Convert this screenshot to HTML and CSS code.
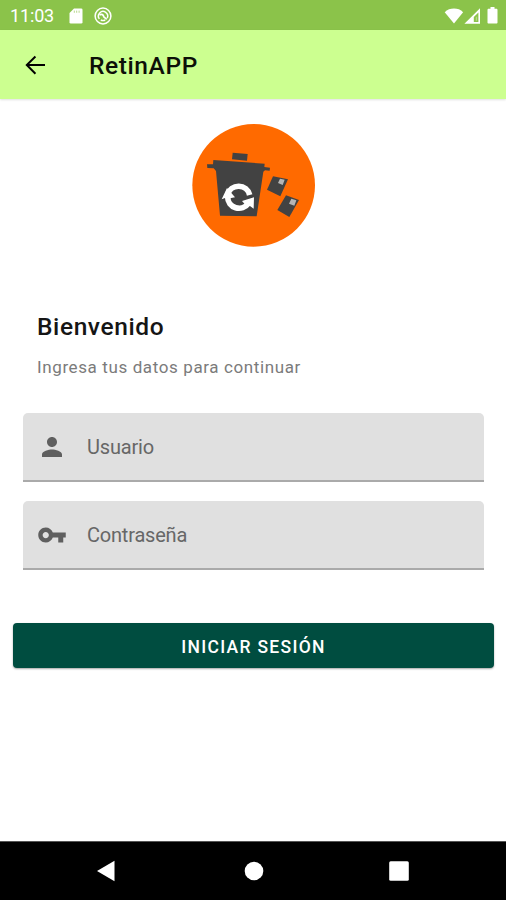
FILE: index.html
```html
<!DOCTYPE html>
<html lang="es">
<head>
<meta charset="utf-8">
<title>RetinAPP</title>
<link rel="stylesheet" href="styles.css">
</head>
<body>
<div class="screen">
  <div class="status-bar">
    <span class="clock">11:03</span>
    <svg class="sd" width="14" height="16" viewBox="0 0 14 16"><path d="M5 0.5h7.2a1.3 1.3 0 0 1 1.3 1.3v12.4a1.3 1.3 0 0 1-1.3 1.3H1.8a1.3 1.3 0 0 1-1.3-1.3V5z" fill="#fff"/><path d="M5.3 2.6v2.2M7.7 2.6v2.2M10.1 2.6v2.2" stroke="#b9d88f" stroke-width="1"/></svg>
    <svg class="sync" width="18" height="18" viewBox="0 0 18 18" fill="none" stroke="#fff"><circle cx="9" cy="9" r="7.9" stroke-width="1.5"/><path d="M5.400 11.900a4.600 4.600 0 1 1 7.800-.8M6.800 13a4.600 4.600 0 0 0 4.400 0" stroke-width="1.500"/><path d="M5.500 8c2.200-1.200 3.900-.4 4.300 1.800l2.900 2.500" stroke-width="1.700"/></svg>
    <div class="signals">
      <svg width="20" height="16" viewBox="0 0 20 16"><path d="M.7 4.2C3.200 1.700 6.500.6 10 .6s6.600 1.100 9.100 3.600L10 15.500z" fill="#fff"/></svg>
      <svg width="17" height="16" viewBox="0 0 17 16"><path fill="#fff" fill-rule="evenodd" d="M16 .2V15.800H.4zM14.400 4.400L9.800 9v4.900h4.600z"/><path fill="#fff" d="M11.800 9.500l1.300-1.300v4.500h-1.300z" opacity=".35"/></svg>
      <svg class="battery" width="11" height="17" viewBox="0 0 11 17"><path fill="#fff" d="M3.500 0h4v1.700h1.900c.6 0 1.100.5 1.100 1.100v12.600c0 .6-.5 1.100-1.100 1.100H1.600c-.6 0-1.100-.5-1.100-1.100V2.800c0-.6.5-1.100 1.100-1.100h1.900z"/></svg>
    </div>
  </div>
  <header class="app-bar">
    <svg class="back" width="30" height="30" viewBox="0 0 24 24"><path d="M20 11.200H7.400l5.500-5.500L11.800 4.500 4.300 12l7.500 7.500 1.100-1.200-5.500-5.500H20z"/></svg>
    <h1 class="app-title">RetinAPP</h1>
  </header>
  <main class="content">
    <svg class="logo" width="124" height="124" viewBox="33 24 372 372">
      <circle cx="221" cy="211" r="184" fill="#ff6a00"/>
      <g fill="#424242">
        <path d="M158 113l45 4-2 20-45-4z"/>
        <path d="M100 135l154 11-1 10 17 2-1 9-14-1-5 4-20 134-110-2-12-134-7-8-19-1-1-11 18 0z"/>
        <path d="M279 184l45 9-23 51-40-20z"/>
        <path d="M318 241l39 14-29 51-36-21z"/>
      </g>
      <path d="M300 191l14 3-6 16-14-6zM334 251l15 5-6 16-16-6z" fill="#b5b5b5"/>
      <g fill="none" stroke="#fff" stroke-width="17">
        <path d="M143 239a34 34 0 0 1 66 1"/>
        <path d="M143 246a34 34 0 0 0 62 19"/>
      </g>
      <path d="M125 253l16-34 24 28-15 3-9-3zM186 258l36-11-1 34-10-7-14-3z" fill="#fff"/>
    </svg>
    <h2 class="welcome">Bienvenido</h2>
    <p class="hint">Ingresa tus datos para continuar</p>
    <div class="field">
      <svg width="30" height="30" viewBox="0 0 24 24"><path d="M12 12c2.210 0 4-1.790 4-4s-1.790-4-4-4-4 1.790-4 4 1.790 4 4 4zm0 2c-2.670 0-8 1.340-8 4v2h16v-2c0-2.660-5.330-4-8-4z"/></svg>
      <span class="user">Usuario</span>
    </div>
    <div class="field">
      <svg width="30" height="30" viewBox="0 0 24 24"><path d="M12.650 10C11.830 7.670 9.610 6 7 6c-3.310 0-6 2.690-6 6s2.690 6 6 6c2.610 0 4.830-1.670 5.650-4H17v4h4v-4h2v-4H12.650zM7 14.500c-1.400 0-2.500-1.100-2.500-2.500s1.100-2.500 2.500-2.500 2.500 1.100 2.500 2.500-1.100 2.500-2.500 2.500z"/></svg>
      <span class="password">Contraseña</span>
    </div>
    <button class="login">INICIAR SESIÓN</button>
  </main>
  <nav class="nav-bar">
    <svg width="20" height="24" viewBox="0 0 20 24"><path d="M18.500 1.800v20.400L1 12z"/></svg>
    <svg class="home" width="20" height="24" viewBox="0 0 20 24"><circle cx="10" cy="12" r="9.300"/></svg>
    <svg width="22" height="24" viewBox="0 0 22 24"><rect x="1.200" y="2.200" width="19.600" height="19.600" rx="1.500"/></svg>
  </nav>
</div>
</body>
</html>
```
FILE: styles.css
```css
* { box-sizing: border-box; }
body { margin: 0; background: #fff; font-family: Roboto, "Liberation Sans", sans-serif; }
.screen { width: 506px; height: 900px; display: flex; flex-direction: column; overflow: hidden; }
.status-bar { height: 30px; flex: none; background: #8bc34a; display: flex; align-items: center; padding: 1px 8px 0 10px; color: #fff; }
.clock { width: 44px; font-size: 18px; line-height: 28px; letter-spacing: -0.15px; padding-top: 1px; white-space: nowrap; }
.sd { margin-left: 15px; }
.sync { margin-left: 11px; }
.signals { margin-left: auto; display: flex; align-items: center; }
.battery { margin-left: 6px; }
.app-bar { height: 69px; flex: none; background: #ccff90; display: flex; align-items: center; padding-left: 20px; box-shadow: 0 1px 2px rgba(0, 0, 0, .12); }
.app-title { margin: 2px 0 0 39px; font-size: 24.5px; line-height: 32px; font-weight: 500; color: #0c1008; letter-spacing: 0.6px; }
.content { flex: 1; display: flex; flex-direction: column; padding: 24px 12px 0; }
.logo { align-self: center; }
.welcome { margin: 64px 0 0 25px; font-size: 24.5px; line-height: 32px; font-weight: 500; letter-spacing: 0.6px; color: #151515; }
.hint { margin: 12px 0 0 25px; font-size: 17px; line-height: 24px; letter-spacing: 0.61px; color: #7b7b7b; }
.field { height: 69px; flex: none; margin: 34px 10px 0 11px; padding-left: 14px; display: flex; align-items: center; background: #e0e0e0; border-bottom: 2px solid #aaa; border-radius: 5px 5px 0 0; fill: #5f5f5f; color: #676767; font-size: 20px; }
.field + .field { margin-top: 19px; }
.field span { margin-left: 20px; line-height: 28px; letter-spacing: -0.2px; }
.login { height: 45px; margin: 53px 0 0 1px; width: 481px; flex: none; padding: 2px 0 0; border: 0; border-radius: 4px; background: #004d40; color: #fff; font: 500 17.5px/24px Roboto, sans-serif; letter-spacing: 1.3px; box-shadow: 0 1px 2px rgba(0, 0, 0, .35); }
.nav-bar { height: 59px; flex: none; background: #000; border-top: 1px solid #555; fill: #fff; display: flex; align-items: center; justify-content: space-between; padding: 0 96px; }
.home { margin-left: 3px; }
```
